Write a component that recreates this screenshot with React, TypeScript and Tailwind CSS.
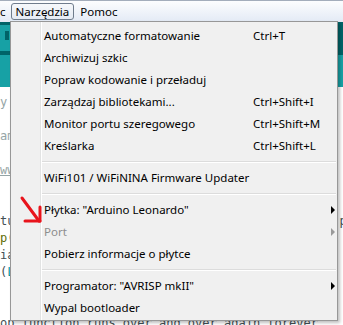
import React from "react";

type Item =
  | { kind: "item"; label: string; shortcut?: string; submenu?: boolean; disabled?: boolean }
  | { kind: "sep" };

const items: Item[] = [
  { kind: "item", label: "Automatyczne formatowanie", shortcut: "Ctrl+T" },
  { kind: "item", label: "Archiwizuj szkic" },
  { kind: "item", label: "Popraw kodowanie i przeładuj" },
  { kind: "item", label: "Zarządzaj bibliotekami...", shortcut: "Ctrl+Shift+I" },
  { kind: "item", label: "Monitor portu szeregowego", shortcut: "Ctrl+Shift+M" },
  { kind: "item", label: "Kreślarka", shortcut: "Ctrl+Shift+L" },
  { kind: "sep" },
  { kind: "item", label: "WiFi101 / WiFiNINA Firmware Updater" },
  { kind: "sep" },
  { kind: "item", label: "Płytka: \"Arduino Leonardo\"", submenu: true },
  { kind: "item", label: "Port", submenu: true, disabled: true },
  { kind: "item", label: "Pobierz informacje o płytce" },
  { kind: "sep" },
  { kind: "item", label: "Programator: \"AVRISP mkII\"", submenu: true },
  { kind: "item", label: "Wypal bootloader" },
];

const Comment = ({ children }: { children: React.ReactNode }) => (
  <span className="text-[#95a5a6]">{children}</span>
);
const LineComment = ({ children }: { children: React.ReactNode }) => (
  <span className="text-[#434f54]">{children}</span>
);

const MenuBar = () => (
  <div className="h-[22px] flex items-center border-t border-[#a3adbb] bg-gradient-to-b from-[#fcfdfe] to-[#e3eaf5] text-[11.5px] text-black">
    <span className="ml-[0px]">c</span>
    <span className="ml-[5px] h-[17px] px-[4px] flex items-center rounded-[3px] border border-[#6f7c8c] bg-gradient-to-b from-[#f6f8fb] to-[#e5ebf3]">
      Narzędzia
    </span>
    <span className="ml-[6px]">Pomoc</span>
  </div>
);

const Editor = () => (
  <div className="pt-[7px] ml-[-65px] font-['DejaVu_Sans_Mono',monospace] text-[12px] leading-[17px] whitespace-pre text-[#434f54]">
    <div><Comment>  by Colby Newman</Comment></div>
    <div>&nbsp;</div>
    <div><Comment>  This example code is in the public domain.</Comment></div>
    <div>&nbsp;</div>
    <div>
      <Comment>  </Comment>
      <span className="text-[#95a5a6] underline">http://www.arduino.cc/en/Tutorial/Blink</span>
    </div>
    <div><Comment>*/</Comment></div>
    <div>&nbsp;</div>
    <div><LineComment>// the setup function runs once when you press reset or power the board</LineComment></div>
    <div>
      <span className="text-[#00979c]">void</span> <span className="text-[#5e6d03]">setup</span>() {"{"}
    </div>
    <div><LineComment>  // initialize digital pin LED_BUILTIN as an output.</LineComment></div>
    <div>
      {"  "}<span className="text-[#d35400]">pinMode</span>(<span className="text-[#00979c]">LED_BUILTIN</span>, <span className="text-[#00979c]">OUTPUT</span>);
    </div>
    <div>{"}"}</div>
    <div>&nbsp;</div>
    <div><LineComment>// the loop function runs over and over again forever</LineComment></div>
  </div>
);

const Menu = () => (
  <div className="absolute left-[10px] top-[21px] w-[328px] h-[300px] flex border border-[#979797] bg-[#f0f0f0] shadow-[2px_2px_3px_rgba(0,0,0,0.25)] text-[11.5px] text-black">
    {/* icon gutter */}
    <div className="w-[30px] border-r border-[#e2e3e3]" />
    <div className="flex-1 border-l border-white pt-[3px]">
      {items.map((it, i) =>
        it.kind === "sep" ? (
          <div key={i} className="h-[10px] flex items-center mr-[1px]">
            <div className="w-full border-t border-[#dcdcdc] border-b border-b-white" />
          </div>
        ) : (
          <div key={i} className="h-[22px] flex items-center pl-[2px] pr-[2px]">
            <span className={`w-[209px] shrink-0 ${it.disabled ? "text-[#8d8d8d]" : ""}`}>{it.label}</span>
            {it.shortcut && <span>{it.shortcut}</span>}
            {it.submenu && (
              <span
                className={`ml-auto w-0 h-0 border-y-[4px] border-y-transparent border-l-[4px] ${
                  it.disabled ? "border-l-[#9a9a9a]" : "border-l-black"
                }`}
              />
            )}
          </div>
        )
      )}
    </div>
  </div>
);

export default function App() {
  return (
    <div className="relative w-[343px] h-[325px] overflow-hidden bg-white font-['Noto_Sans',sans-serif]">
      <MenuBar />
      {/* toolbar */}
      <div className="h-[33px] bg-[#006468] pt-[3px]">
        <div className="w-[10px] h-[26px] bg-[#17a1a5] flex justify-end items-start pt-[6px]">
          <div className="w-[4px] h-[9px] bg-[#006468] mr-[1px]" />
        </div>
      </div>
      {/* tabs */}
      <div className="h-[32px] bg-[#17a1a5]" />
      <Editor />
      <Menu />
      {/* red annotation arrow */}
      <svg className="absolute left-0 top-0" width="60" height="240" viewBox="0 0 60 240">
        <g stroke="#e8141c" strokeWidth="3" strokeLinecap="round" fill="none">
          <line x1="22" y1="198" x2="39" y2="221" />
          <line x1="25" y1="221" x2="40" y2="221" />
          <line x1="40" y1="207" x2="40" y2="221" />
        </g>
      </svg>
    </div>
  );
}
